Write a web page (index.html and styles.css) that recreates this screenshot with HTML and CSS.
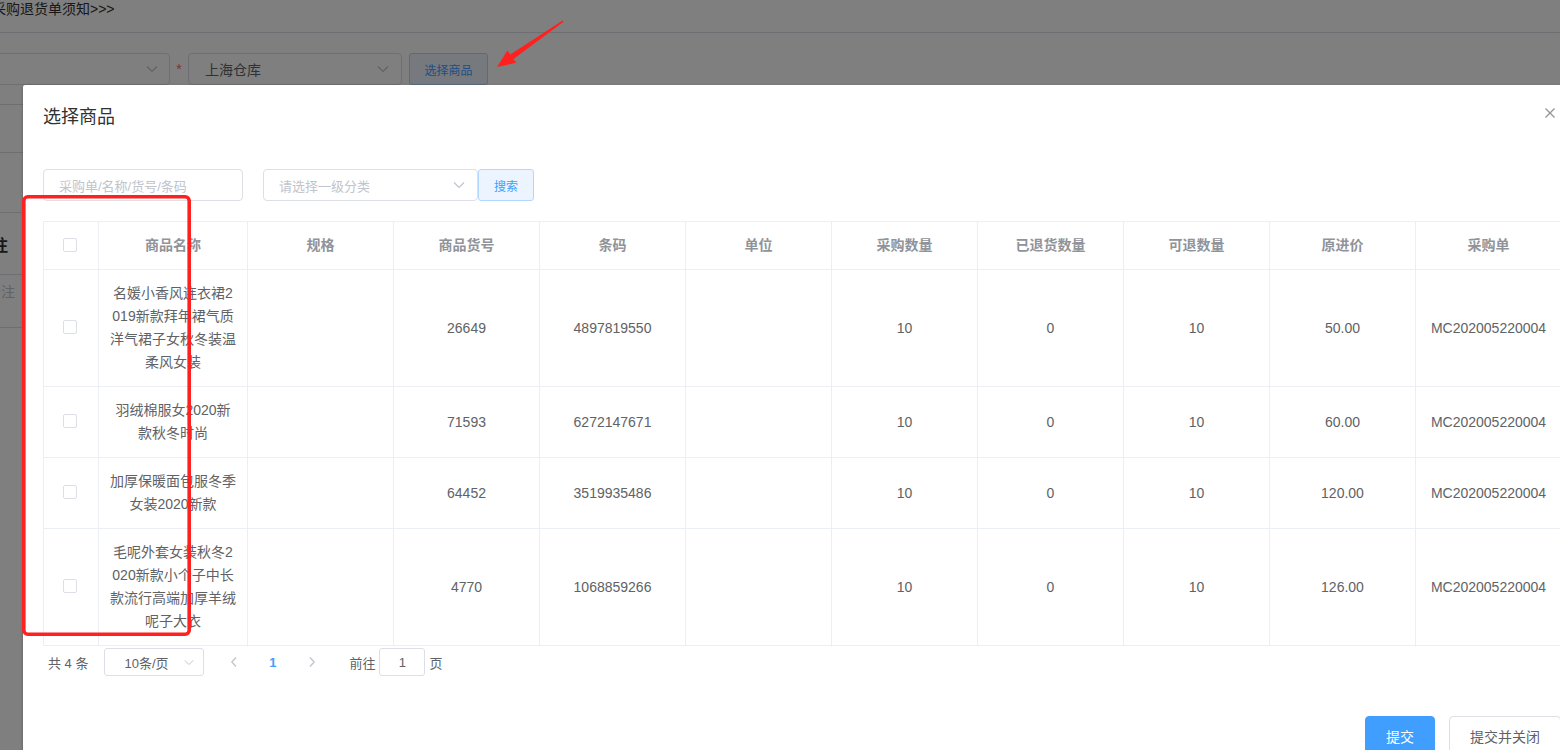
FILE: index.html
```html
<!DOCTYPE html>
<html lang="zh-CN">
<head>
<meta charset="utf-8">
<title>选择商品</title>
<link rel="stylesheet" href="styles.css">
</head>
<body>
<div class="page">
  <div class="notice">采购退货单须知&gt;&gt;&gt;</div>
  <div class="form-row">
    <div class="bg-select sel-a">
      <svg class="chev" width="12" height="8" viewBox="0 0 12 8"><polyline points="1,1.5 6,6.5 11,1.5" fill="none" stroke="#c0c4cc" stroke-width="1.2"/></svg>
    </div>
    <span class="star">*</span>
    <div class="bg-select sel-b">
      <span>上海仓库</span>
      <svg class="chev" width="12" height="8" viewBox="0 0 12 8"><polyline points="1,1.5 6,6.5 11,1.5" fill="none" stroke="#c0c4cc" stroke-width="1.2"/></svg>
    </div>
    <button class="bg-btn">选择商品</button>
  </div>
  <div class="bg-sec s1"></div>
  <div class="bg-sec s2"></div>
  <div class="bg-sec s3"></div>
  <div class="bg-sec s4"><span class="bg-label">备注</span></div>
  <div class="bg-sec s5"><span class="bg-ph">备注</span></div>
</div>

<div class="mask"></div>

<div class="dialog">
  <div class="dlg-header">
    <span class="dlg-title">选择商品</span>
    <button class="dlg-close" aria-label="关闭">
      <svg width="12" height="12" viewBox="0 0 12 12"><path d="M1.5 1.5 L10.5 10.5 M10.5 1.5 L1.5 10.5" stroke="#909399" stroke-width="1.3" fill="none"/></svg>
    </button>
  </div>
  <div class="dlg-body">
    <div class="search-row">
      <div class="inp search-inp"><span class="ph">采购单/名称/货号/条码</span></div>
      <div class="inp cat-sel">
        <span class="ph">请选择一级分类</span>
        <svg class="chev" width="12" height="8" viewBox="0 0 12 8"><polyline points="1,1.5 6,6.5 11,1.5" fill="none" stroke="#c0c4cc" stroke-width="1.2"/></svg>
      </div>
      <button class="search-btn">搜索</button>
    </div>

    <table class="grid">
      <colgroup>
        <col class="c-cb"><col class="c-name"><col class="c-std"><col class="c-std"><col class="c-std"><col class="c-std"><col class="c-std"><col class="c-std"><col class="c-std"><col class="c-std"><col class="c-std">
      </colgroup>
      <thead>
        <tr>
          <th><div class="cell"><span class="cb"></span></div></th>
          <th><div class="cell">商品名称</div></th>
          <th><div class="cell">规格</div></th>
          <th><div class="cell">商品货号</div></th>
          <th><div class="cell">条码</div></th>
          <th><div class="cell">单位</div></th>
          <th><div class="cell">采购数量</div></th>
          <th><div class="cell">已退货数量</div></th>
          <th><div class="cell">可退数量</div></th>
          <th><div class="cell">原进价</div></th>
          <th><div class="cell">采购单</div></th>
        </tr>
      </thead>
      <tbody>
        <tr>
          <td><div class="cell"><span class="cb"></span></div></td>
          <td><div class="cell">名媛小香风连衣裙2<br>019新款拜年裙气质<br>洋气裙子女秋冬装温<br>柔风女装</div></td>
          <td><div class="cell"></div></td>
          <td><div class="cell">26649</div></td>
          <td><div class="cell">4897819550</div></td>
          <td><div class="cell"></div></td>
          <td><div class="cell">10</div></td>
          <td><div class="cell">0</div></td>
          <td><div class="cell">10</div></td>
          <td><div class="cell">50.00</div></td>
          <td><div class="cell">MC202005220004</div></td>
        </tr>
        <tr>
          <td><div class="cell"><span class="cb"></span></div></td>
          <td><div class="cell">羽绒棉服女2020新<br>款秋冬时尚</div></td>
          <td><div class="cell"></div></td>
          <td><div class="cell">71593</div></td>
          <td><div class="cell">6272147671</div></td>
          <td><div class="cell"></div></td>
          <td><div class="cell">10</div></td>
          <td><div class="cell">0</div></td>
          <td><div class="cell">10</div></td>
          <td><div class="cell">60.00</div></td>
          <td><div class="cell">MC202005220004</div></td>
        </tr>
        <tr>
          <td><div class="cell"><span class="cb"></span></div></td>
          <td><div class="cell">加厚保暖面包服冬季<br>女装2020新款</div></td>
          <td><div class="cell"></div></td>
          <td><div class="cell">64452</div></td>
          <td><div class="cell">3519935486</div></td>
          <td><div class="cell"></div></td>
          <td><div class="cell">10</div></td>
          <td><div class="cell">0</div></td>
          <td><div class="cell">10</div></td>
          <td><div class="cell">120.00</div></td>
          <td><div class="cell">MC202005220004</div></td>
        </tr>
        <tr>
          <td><div class="cell"><span class="cb"></span></div></td>
          <td><div class="cell">毛呢外套女装秋冬2<br>020新款小个子中长<br>款流行高端加厚羊绒<br>呢子大衣</div></td>
          <td><div class="cell"></div></td>
          <td><div class="cell">4770</div></td>
          <td><div class="cell">1068859266</div></td>
          <td><div class="cell"></div></td>
          <td><div class="cell">10</div></td>
          <td><div class="cell">0</div></td>
          <td><div class="cell">10</div></td>
          <td><div class="cell">126.00</div></td>
          <td><div class="cell">MC202005220004</div></td>
        </tr>
      </tbody>
    </table>

    <div class="pager">
      <span class="total">共 4 条</span>
      <div class="sizes">
        <span>10条/页</span>
        <svg class="chev" width="10" height="7" viewBox="0 0 12 8"><polyline points="1,1.5 6,6.5 11,1.5" fill="none" stroke="#c0c4cc" stroke-width="1.2"/></svg>
      </div>
      <button class="pg-btn" aria-label="上一页">
        <svg width="8" height="12" viewBox="0 0 8 12"><polyline points="6,1.5 1.8,6 6,10.5" fill="none" stroke="#c0c4cc" stroke-width="1.3"/></svg>
      </button>
      <span class="pg-num">1</span>
      <button class="pg-btn" aria-label="下一页">
        <svg width="8" height="12" viewBox="0 0 8 12"><polyline points="2,1.5 6.2,6 2,10.5" fill="none" stroke="#c0c4cc" stroke-width="1.3"/></svg>
      </button>
      <span class="jump">前往</span>
      <div class="jump-inp">1</div>
      <span class="jump-suffix">页</span>
    </div>
  </div>
  <div class="dlg-footer">
    <button class="btn btn-primary">提交</button>
    <button class="btn">提交并关闭</button>
  </div>
</div>

<svg class="annot" width="1560" height="750" viewBox="0 0 1560 750">
  <rect x="23.8" y="196.8" width="165.4" height="437.4" rx="4" ry="4" fill="none" stroke="#ff2020" stroke-width="3.6"/>
  <polygon points="563.6,21.8 513.4,58.9 516.4,62.8 497,67 507.4,50.6 510.3,54.6 562.6,20.4" fill="#ff2020"/>
</svg>
</body>
</html>
```

FILE: styles.css
```css
* { box-sizing: border-box; }
html, body { margin: 0; padding: 0; }
body {
  width: 1560px;
  height: 750px;
  overflow: hidden;
  position: relative;
  background: #fff;
  color: #606266;
  font-family: "Liberation Sans", "Noto Sans CJK SC", sans-serif;
}
button { font-family: inherit; cursor: pointer; }

/* background page */
.page { margin-left: -8px; width: 1620px; }
.notice {
  height: 33px;
  border-bottom: 1px solid #dcdfe6;
  font-size: 14px;
  line-height: 18px;
  color: #303133;
}
.form-row {
  display: flex;
  align-items: center;
  padding-top: 20px;
  height: 52px;
}
.bg-select {
  height: 32px;
  border: 1px solid #dcdfe6;
  border-radius: 4px;
  background: #fff;
  display: flex;
  align-items: center;
  font-size: 14px;
  color: #606266;
}
.sel-a { width: 178px; justify-content: flex-end; padding-right: 11px; }
.sel-b { width: 214px; justify-content: space-between; padding: 0 12px 0 16px; }
.star { width: 18px; text-align: center; color: #f56c6c; font-size: 14px; }
.bg-btn {
  margin-left: 7px;
  width: 79px;
  height: 32px;
  font-size: 12px;
  color: #409eff;
  background: #ecf5ff;
  border: 1px solid #b3d8ff;
  border-radius: 3px;
  padding: 0;
}
.bg-sec { border-bottom: 1px solid #dcdfe6; position: relative; display: flex; align-items: center; }
.s1 { height: 20px; }
.s2 { height: 48px; }
.s3 { height: 60px; }
.s4 { height: 62px; }
.s5 { height: 53px; align-items: flex-start; }
.bg-label {
  margin-left: -16px;
  white-space: nowrap;
  font-size: 16px;
  font-weight: 600;
  color: #303133;
}
.bg-ph {
  margin-left: -5px;
  margin-top: 8px;
  font-size: 14px;
  color: #c0c4cc;
  line-height: 18px;
}

.mask {
  position: absolute;
  left: 0; top: 0; right: 0; bottom: 0;
  background: rgba(0, 0, 0, 0.5);
}

/* dialog */
.dialog {
  position: absolute;
  left: 23px;
  top: 85px;
  width: 1558px;
  height: 720px;
  background: #fff;
  border-radius: 2px;
  box-shadow: 0 1px 3px rgba(0,0,0,.3);
}
.dlg-header {
  position: relative;
  padding: 20px 20px 10px;
}
.dlg-title {
  display: block;
  font-size: 18px;
  line-height: 24px;
  color: #303133;
}
.dlg-close {
  position: absolute;
  top: 20px;
  right: 23px;
  width: 16px;
  height: 16px;
  padding: 0;
  border: 0;
  background: transparent;
  display: flex;
  align-items: center;
  justify-content: center;
}
.dlg-body { padding: 30px 20px 30px; }

.search-row { display: flex; height: 32px; }
.inp {
  height: 32px;
  border: 1px solid #dcdfe6;
  border-radius: 4px;
  display: flex;
  align-items: center;
  font-size: 13px;
}
.ph { color: #c0c4cc; }
.search-inp { width: 200px; padding-left: 15px; margin-right: 20px; }
.cat-sel { width: 215px; padding: 0 12px 0 15px; justify-content: space-between; }
.search-btn {
  width: 56px;
  height: 32px;
  font-size: 12px;
  color: #409eff;
  background: #ecf5ff;
  border: 1px solid #b3d8ff;
  border-radius: 3px;
  padding: 0;
}

/* table */
.grid {
  margin-top: 20px;
  width: 1518px;
  table-layout: fixed;
  border-collapse: separate;
  border-spacing: 0;
  border-top: 1px solid #ebeef5;
  border-left: 1px solid #ebeef5;
  font-size: 14px;
  color: #606266;
}
.c-cb { width: 55px; }
.c-name { width: 149px; }
.c-std { width: 146px; }
.grid th, .grid td {
  border-right: 1px solid #ebeef5;
  border-bottom: 1px solid #ebeef5;
  padding: 12px 0;
  text-align: center;
  vertical-align: middle;
}
.grid th {
  color: #909399;
  font-weight: 700;
}
.cell {
  padding: 0 10px;
  line-height: 23px;
  word-break: break-all;
  white-space: nowrap;
}
.cb {
  display: inline-block;
  width: 14px;
  height: 14px;
  border: 1px solid #dcdfe6;
  border-radius: 2px;
  background: #fff;
  vertical-align: middle;
  margin-top: -3px;
  margin-left: -2px;
}

/* pagination */
.pager {
  display: flex;
  align-items: center;
  height: 28px;
  margin-top: 2px;
  padding-left: 5px;
  font-size: 13px;
  color: #606266;
}
.total { margin-right: 16px; }
.sizes {
  width: 100px;
  height: 28px;
  border: 1px solid #dcdfe6;
  border-radius: 3px;
  display: flex;
  align-items: center;
  justify-content: space-between;
  padding: 0 9px 0 19px;
  margin-right: 10px;
}
.pg-btn {
  width: 39px;
  height: 28px;
  border: 0;
  background: transparent;
  padding: 0;
  display: flex;
  align-items: center;
  justify-content: center;
}
.pg-num {
  width: 39px;
  text-align: center;
  color: #409eff;
  font-weight: 700;
}
.jump { margin-left: 18px; }
.jump-inp {
  width: 46px;
  height: 28px;
  margin: 0 4px;
  border: 1px solid #dcdfe6;
  border-radius: 3px;
  display: flex;
  align-items: center;
  justify-content: center;
}

/* footer */
.dlg-footer {
  padding: 10px 20px 20px;
  display: flex;
  justify-content: flex-end;
  gap: 14px;
}
.btn {
  height: 40px;
  padding: 0 20px;
  font-size: 14px;
  border-radius: 4px;
  border: 1px solid #dcdfe6;
  background: #fff;
  color: #606266;
}
.btn-primary {
  background: #409eff;
  border-color: #409eff;
  color: #fff;
}

.annot {
  position: absolute;
  left: 0;
  top: 0;
  pointer-events: none;
}
```
